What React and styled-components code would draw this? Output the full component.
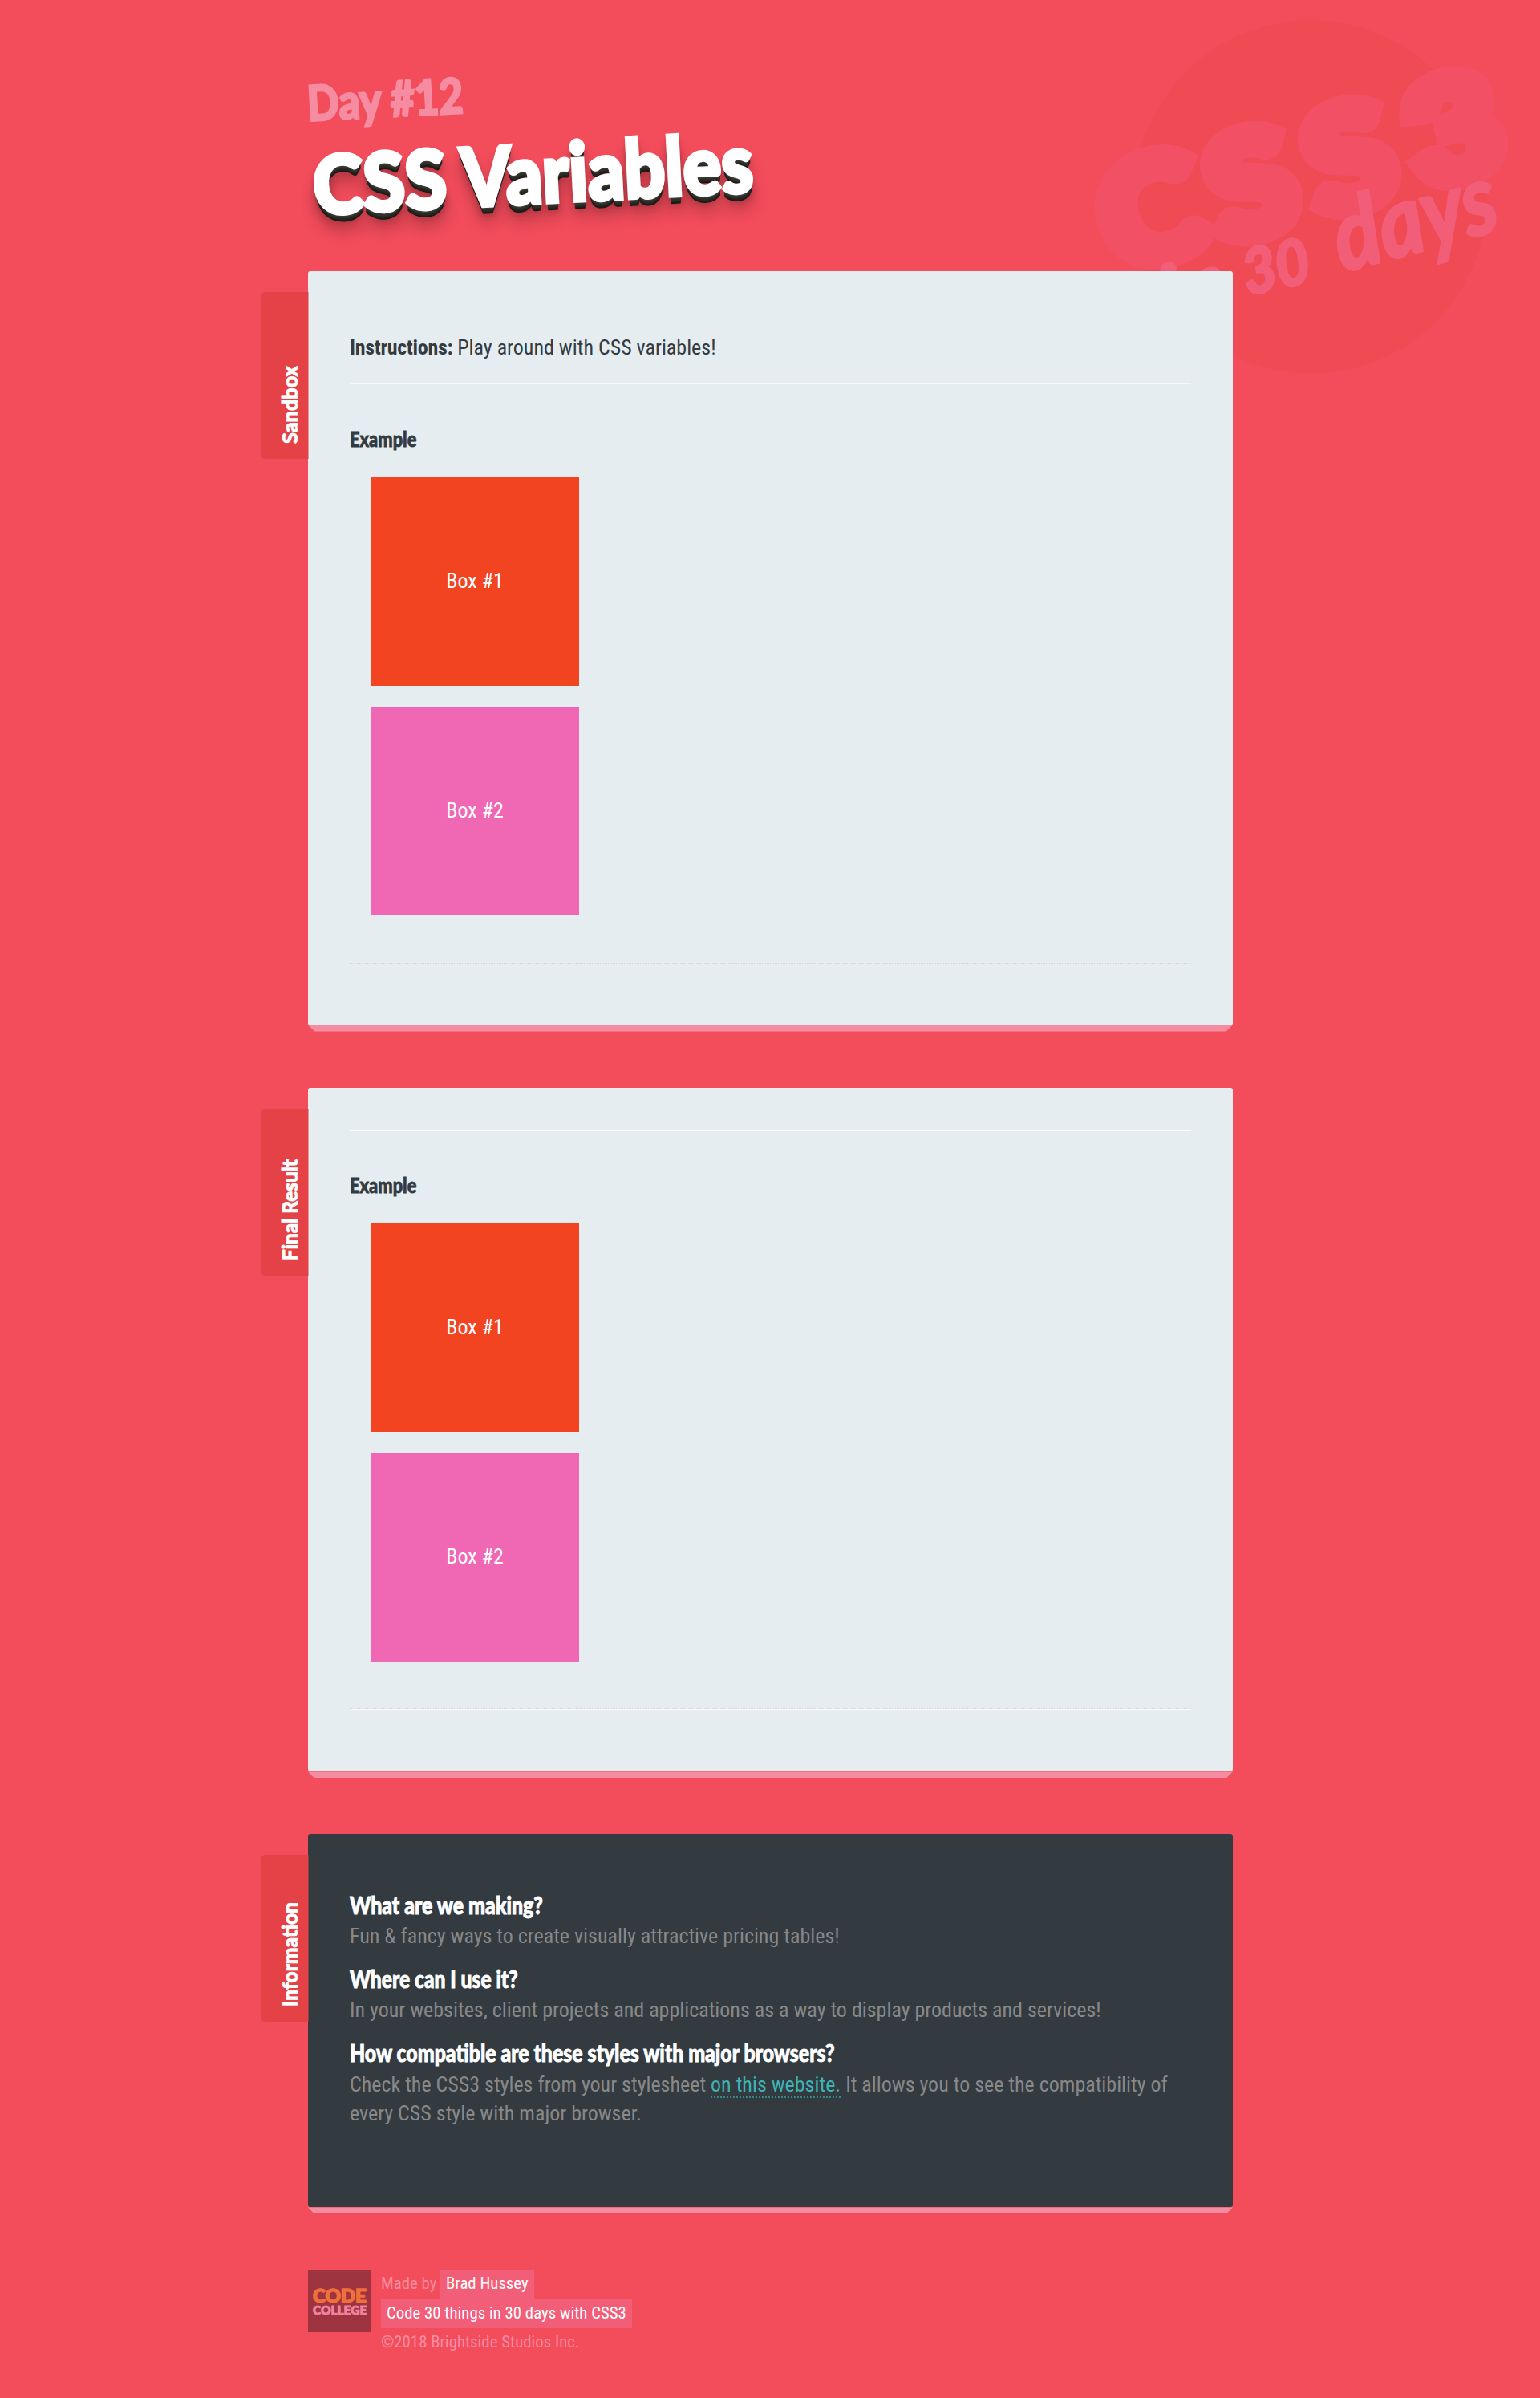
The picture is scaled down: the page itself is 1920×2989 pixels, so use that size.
import React, { useLayoutEffect, useRef, useState } from 'react';
import styled, { createGlobalStyle } from 'styled-components';

const Global = createGlobalStyle`
  html { font-size: 26px; }
  body {
    margin: 0;
    background: #f34c5b;
    color: #333b41;
    font: 400 1rem/1.4 "Roboto Condensed", Roboto, sans-serif;
  }
  h1, h2, h3, h4, p { margin: 0; font-weight: inherit; font-size: inherit; }
`;

const display = 'font-family: Lato, "Open Sans", sans-serif; font-weight: 900;';

const Page = styled.div`
  position: relative;
  box-sizing: border-box;
  width: 1920px;
  height: 2989px;
  padding: 0 383px 0 384px;
  overflow: hidden;
`;

const Watermark = styled.svg`
  position: absolute;
  top: 0;
  right: 0;
  width: 580px;
  height: 500px;
  font-family: Lato, sans-serif;
  font-weight: 900;
`;

const Header = styled.header`
  position: relative;
  box-sizing: border-box;
  height: 338px;
  padding-top: 89px;
`;

const Day = styled.h2`
  ${display}
  font-size: 61px;
  line-height: 78px;
  color: #f58ca1;
  -webkit-text-stroke: 2.5px #f58ca1;
  transform: rotate(-3deg);
  transform-origin: 0 60px;
`;

const Title = styled.h1`
  ${display}
  display: flex;
  gap: 18px;
  padding: 2px 0 0 8px;
  font-size: 101px;
  line-height: 120px;
  color: #fff;
  transform: rotate(-3deg);
  transform-origin: 0 100px;
  -webkit-text-stroke: 5px #fff;
  text-shadow: 0 1px 0 #4a4a42, 0 2px 0 #44443d, 0 3px 0 #3e3e38, 0 4px 0 #393933,
    0 5px 0 #33332e, 0 6px 0 #2e2e29, 0 7px 0 #282824, 0 8px 0 #23231f,
    0 9px 0 #1d1d1a, 0 10px 0 #181815, 0 0 5px rgba(0, 0, 0, 0.1),
    0 3px 5px rgba(0, 0, 0, 0.25), 0 10px 10px rgba(0, 0, 0, 0.25),
    0 20px 20px rgba(0, 0, 0, 0.3);
`;

const FitBox = styled.span`
  display: inline-block;
  width: ${(p) => p.$width}px;
  white-space: nowrap;
`;
const FitInner = styled.span`
  display: inline-block;
  transform-origin: 0 0;
`;

function Fit({ width, children }) {
  const ref = useRef(null);
  const [scale, setScale] = useState(1);
  useLayoutEffect(() => {
    setScale(width / ref.current.offsetWidth);
  }, [width, children]);
  return (
    <FitBox $width={width}>
      <FitInner ref={ref} style={{ transform: `scaleX(${scale})` }}>{children}</FitInner>
    </FitBox>
  );
}

const Panel = styled.section`
  position: relative;
  box-sizing: border-box;
  height: ${(p) => p.$height}px;
  margin-bottom: 78px;
  padding: 52px;
  border-radius: 3px;
  background: ${(p) => (p.$dark ? '#333b41' : '#e5edf0')};
  &::after {
    content: '';
    position: absolute;
    left: 0;
    right: 0;
    top: 100%;
    height: 8px;
    background: #f58ca1;
    clip-path: polygon(0 0, 100% 0, calc(100% - 8px) 100%, 8px 100%);
  }
`;

const Tab = styled.div`
  ${display}
  position: absolute;
  box-sizing: border-box;
  top: 26px;
  right: 100%;
  width: 58.5px;
  height: 208px;
  padding-top: 19px;
  border-radius: 0 5px 5px 0;
  background: #e44246;
  color: #fff;
  font-size: 27px;
  line-height: 49px;
  -webkit-text-stroke: 0.8px #fff;
  writing-mode: vertical-lr;
  transform: rotate(180deg);
`;
const TabLabel = styled.span`
  display: block;
  transform-origin: 0 0;
`;

function SideTab({ length, children }) {
  const ref = useRef(null);
  const [scale, setScale] = useState(1);
  useLayoutEffect(() => {
    const range = document.createRange();
    range.selectNodeContents(ref.current);
    setScale(length / range.getBoundingClientRect().height);
  }, []);
  return (
    <Tab>
      <TabLabel ref={ref} style={{ transform: `scaleY(${scale})` }}>{children}</TabLabel>
    </Tab>
  );
}

const Instructions = styled.p`
  padding: 25px 0 27px;
  strong { font-weight: 700; letter-spacing: -0.3px; }
`;

const Rule = styled.hr`
  height: 0;
  margin: 0 0 ${(p) => (p.$light ? 0.5 : 0)}px;
  border: 0;
  border-top: 1px ${(p) => (p.$light ? 'solid #f6f7f7' : 'dotted #d4d5d6')};
  border-bottom: ${(p) => (p.$light ? 0 : 1)}px solid #fbfbfb;
`;

const ExampleTitle = styled.h4`
  ${display}
  padding: 53.6px 0 5.4px;
  line-height: 29.4px;
  -webkit-text-stroke: 0.8px #333b41;
`;

const Boxes = styled.div`
  display: flex;
  flex-direction: column;
  gap: 26px;
  padding: 26.7px 26px 58.6px;
`;
const Box = styled.div`
  display: flex;
  align-items: center;
  justify-content: center;
  box-sizing: border-box;
  width: 260px;
  height: 260px;
  padding-bottom: 1px;
  background: ${(p) => p.$color};
  color: #fff;
`;

const Question = styled.h3`
  ${display}
  padding-bottom: 5px;
  font-size: 30px;
  line-height: 31.4px;
  color: #fff;
  -webkit-text-stroke: 0.9px #fff;
`;
const Answer = styled.p`
  padding-bottom: 19.4px;
  color: #888;
`;
const Link = styled.a`
  color: #3db3b3;
  border-bottom: 2px dotted #34898d;
`;
const Info = styled.div`
  padding-top: 20.4px;
`;

const Footer = styled.footer`
  display: flex;
  gap: 13px;
  font-size: 20.8px;
  line-height: 34.4px;
  color: #f58ca1;
`;
const Credit = styled.p`
  height: 36.4px;
`;
const Logo = styled.div`
  ${display}
  display: flex;
  flex-direction: column;
  align-items: center;
  box-sizing: border-box;
  width: 78px;
  height: 78px;
  padding-top: 23px;
  background: #9d3440;
`;
const LogoTop = styled.span`
  height: 19px;
  font-size: 22.5px;
  line-height: 19px;
  color: #f0703c;
  -webkit-text-stroke: 1.4px #f0703c;
`;
const LogoBottom = styled.span`
  font-size: 15px;
  line-height: 16px;
  color: #f283a0;
  -webkit-text-stroke: 0.9px #f283a0;
`;
const Mark = styled.a`
  display: inline-block;
  padding: 0 7px 2px;
  background: #f25d78;
  color: #fff;
`;

function Example() {
  return (
    <>
      <ExampleTitle><Fit width={83}>Example</Fit></ExampleTitle>
      <Boxes>
        <Box $color="#f24421">Box #1</Box>
        <Box $color="#f067b4">Box #2</Box>
      </Boxes>
      <Rule />
    </>
  );
}

const bigLetters = [
  { char: 'C', x: 1434, y: 262, width: 125 },
  { char: 'S', x: 1560, y: 230, width: 106 },
  { char: 'S', x: 1682, y: 197, width: 106 },
  { char: '3', x: 1812, y: 161, width: 116 },
];

export default function App() {
  return (
    <Page>
      <Global />
      <Watermark viewBox="1340 0 580 500">
        <circle cx="1634" cy="245.5" r="220" fill="#f04a55" />
        <g fill="#f15065" stroke="#f15065" strokeWidth="24" strokeMiterlimit="2" fontSize="176" textAnchor="middle">
          {bigLetters.map((l) => (
            <text
              key={l.x}
              y="63"
              transform={`translate(${l.x} ${l.y}) rotate(-15)`}
              textLength={l.width}
              lengthAdjust="spacingAndGlyphs"
            >
              {l.char}
            </text>
          ))}
        </g>
        <g fill="#f25d78" stroke="#f25d78" strokeWidth="3.5" strokeLinejoin="round" fontStyle="italic" fontWeight="700">
          <text transform="translate(1455 396) rotate(-15)" fontSize="88" textLength="84" lengthAdjust="spacingAndGlyphs">in</text>
          <text transform="translate(1555 368) rotate(-12)" fontSize="78" textLength="84" lengthAdjust="spacingAndGlyphs">30</text>
          <text transform="translate(1674 339) rotate(-15)" fontSize="122" textLength="207" lengthAdjust="spacingAndGlyphs">days</text>
        </g>
      </Watermark>
      <Header>
        <Day><Fit width={195}>Day #12</Fit></Day>
        <Title><Fit width={167}>CSS</Fit><Fit width={364}>Variables</Fit></Title>
      </Header>
      <Panel $height={939.6}>
        <SideTab length={97}>Sandbox</SideTab>
        <Instructions><strong>Instructions:</strong> Play around with CSS variables!</Instructions>
        <Rule $light />
        <Example />
      </Panel>
      <Panel $height={852.9}>
        <SideTab length={126}>Final Result</SideTab>
        <Rule />
        <Example />
      </Panel>
      <Panel $dark $height={464.9}>
        <SideTab length={130}>Information</SideTab>
        <Info>
          <Question><Fit width={241}>What are we making?</Fit></Question>
          <Answer>Fun &amp; fancy ways to create visually attractive pricing tables!</Answer>
          <Question><Fit width={210}>Where can I use it?</Fit></Question>
          <Answer>In your websites, client projects and applications as a way to display products and services!</Answer>
          <Question><Fit width={605}>How compatible are these styles with major browsers?</Fit></Question>
          <Answer>
            Check the CSS3 styles from your stylesheet <Link>on this website.</Link> It allows you to see the compatibility of
            every CSS style with major browser.
          </Answer>
        </Info>
      </Panel>
      <Footer>
        <Logo>
          <LogoTop><Fit width={67}>CODE</Fit></LogoTop>
          <LogoBottom><Fit width={67}>COLLEGE</Fit></LogoBottom>
        </Logo>
        <div>
          <Credit>Made by <Mark>Brad Hussey</Mark></Credit>
          <Credit><Mark>Code 30 things in 30 days with CSS3</Mark></Credit>
          <Credit>©2018 Brightside Studios Inc.</Credit>
        </div>
      </Footer>
    </Page>
  );
}
